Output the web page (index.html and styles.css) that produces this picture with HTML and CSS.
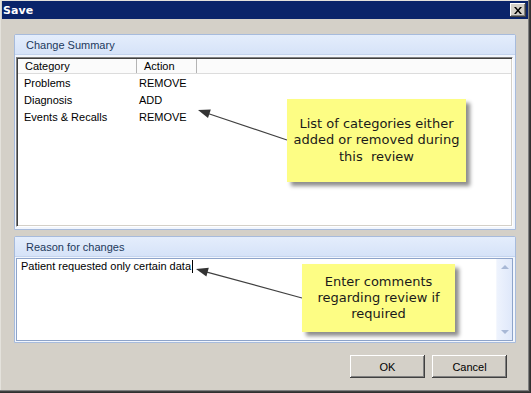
FILE: index.html
```html
<!DOCTYPE html>
<html lang="en">
<head>
    <meta charset="UTF-8">
    <title>Save</title>
    <link rel="stylesheet" href="styles.css">
</head>
<body>
    <div class="window">
        <div class="titlebar">
            <span class="title">Save</span>
            <button type="button" class="close-btn" aria-label="Close">
                <svg width="8" height="7" viewBox="0 0 8 7"><path d="M0 0h2l2 2.5L6 0h2L5 3.5 8 7H6L4 4.5 2 7H0l3-3.5z" fill="#000"/></svg>
            </button>
        </div>
        <div class="content">
            <section class="panel summary">
                <div class="panel-head">Change Summary</div>
                <div class="panel-body">
                    <div class="list">
                        <div class="list-head">
                            <div class="col col-cat">Category</div>
                            <div class="col col-act">Action</div>
                            <div class="col col-rest"></div>
                        </div>
                        <div class="row"><span class="cell-cat">Problems</span><span class="cell-act">REMOVE</span></div>
                        <div class="row"><span class="cell-cat">Diagnosis</span><span class="cell-act">ADD</span></div>
                        <div class="row"><span class="cell-cat">Events &amp; Recalls</span><span class="cell-act">REMOVE</span></div>
                    </div>
                </div>
            </section>
            <section class="panel reason">
                <div class="panel-head">Reason for changes</div>
                <div class="panel-body">
                    <div class="memo">
                        <div class="memo-text">Patient requested only certain data<span class="caret"></span></div>
                        <div class="scrollbar">
                            <span class="arrow-up"></span>
                            <span class="arrow-down"></span>
                        </div>
                    </div>
                </div>
            </section>
            <div class="buttons">
                <button type="button" class="btn">OK</button>
                <button type="button" class="btn">Cancel</button>
            </div>
        </div>

        <!-- annotation callouts -->
        <svg class="arrows" width="531" height="393" viewBox="0 0 531 393">
            <line x1="287" y1="140" x2="208" y2="113.5" stroke="#404040" stroke-width="1.2"/>
            <polygon points="198,110 208,118 210.8,109.5" fill="#333"/>
            <line x1="302" y1="298" x2="206" y2="271.8" stroke="#404040" stroke-width="1.2"/>
            <polygon points="196,269 206.4,276.5 208.8,267.8" fill="#333"/>
        </svg>
        <div class="note note-list">List of categories either<br>added or removed during<br>this&nbsp; review</div>
        <div class="note note-memo">Enter comments<br>regarding review if<br>required</div>
    </div>
</body>
</html>
```

FILE: styles.css
```css
body {
    margin: 0;
    background: #d4d0c8;
    font-family: "Liberation Sans", Arial, sans-serif;
    font-size: 11px;
    color: #000;
}
.window {
    position: relative;
    width: 531px;
    height: 393px;
    box-sizing: border-box;
    background: #d4d0c8;
    box-shadow: inset -1px -1px #303030, inset -2px -2px #404040, inset -3px -3px #808080, inset 1px 1px #e4e2dc;
    overflow: hidden;
}
.titlebar {
    height: 18px;
    margin: 1px 3px 0 2px;
    background: #0a246a;
    display: flex;
    align-items: center;
    justify-content: space-between;
    padding: 0 2px 0 1px;
}
.title {
    color: #fff;
    font-family: "DejaVu Sans", Verdana, sans-serif;
    font-weight: bold;
    font-size: 11px;
    letter-spacing: 0.1px;
}
.close-btn {
    width: 16px;
    height: 14px;
    padding: 0;
    margin: 0;
    border: none;
    background: #d4d0c8;
    box-shadow: inset -1px -1px #404040, inset 1px 1px #fff, inset -2px -2px #808080;
    display: flex;
    align-items: center;
    justify-content: center;
}
.content {
    padding: 15px 15px 0 14px;
}
.panel {
    border: 1px solid #a7bbdc;
    border-radius: 2px 2px 0 0;
    background: #f2f6fd;
    box-sizing: border-box;
}
.summary {
    height: 196px;
}
.reason {
    height: 107px;
    margin-top: 6px;
}
.panel-head {
    height: 20px;
    line-height: 20px;
    padding-left: 11px;
    color: #22395c;
    background: linear-gradient(180deg, #e4edfc 0%, #d6e3f8 100%);
    border-bottom: 1px solid #c4d4ee;
    box-sizing: border-box;
}
.panel-body {
    padding: 2px 2px 0 1px;
}
.reason .panel-body {
    padding-top: 1px;
}
.list {
    height: 170px;
    box-sizing: border-box;
    background: #fff;
    border-top: 1px solid #808080;
    border-left: 1px solid #808080;
    border-right: 1px solid #fff;
    border-bottom: 1px solid #fff;
    box-shadow: inset 1px 1px #404040, inset -1px -1px #d4d0c8;
    padding: 1px 1px 0 1px;
}
.list-head {
    display: flex;
    height: 15px;
    line-height: 14px;
    background: #fbfbfb;
    border-bottom: 1px solid #dcdcdc;
    box-sizing: border-box;
}
.col {
    padding-left: 7px;
    border-right: 1px solid #b4b4b4;
    box-sizing: border-box;
}
.col-cat {
    width: 119px;
}
.col-act {
    width: 60px;
}
.col-rest {
    flex: 1;
    border-right: none;
}
.row {
    display: flex;
    height: 17px;
    line-height: 17px;
}
.row:first-of-type {
    margin-top: 1px;
}
.list-head + .row {
    margin-top: 1px;
}
.cell-cat {
    width: 119px;
    padding-left: 6px;
    box-sizing: border-box;
}
.cell-act {
    padding-left: 2px;
}
.memo {
    position: relative;
    height: 83px;
    box-sizing: border-box;
    background: #fff;
    border: 1px solid #8ea4ca;
    display: flex;
}
.memo-text {
    flex: 1;
    padding: 1px 0 0 4px;
    line-height: 13px;
}
.caret {
    display: inline-block;
    width: 1px;
    height: 13px;
    margin-left: 1px;
    background: #000;
    vertical-align: top;
}
.scrollbar {
    width: 16px;
    background: linear-gradient(90deg, #eef3fd 0%, #dfe8fa 100%);
    border-left: 1px solid #f4f7fd;
    display: flex;
    flex-direction: column;
    justify-content: space-between;
    align-items: center;
    padding: 6px 0 6px;
    box-sizing: border-box;
}
.arrow-up {
    width: 0;
    height: 0;
    border-left: 4px solid transparent;
    border-right: 4px solid transparent;
    border-bottom: 4px solid #a8b8d6;
}
.arrow-down {
    width: 0;
    height: 0;
    border-left: 4px solid transparent;
    border-right: 4px solid transparent;
    border-top: 4px solid #a8b8d6;
}
.buttons {
    display: flex;
    justify-content: flex-end;
    gap: 7px;
    margin-top: 12px;
    padding-right: 9px;
}
.btn {
    width: 75px;
    height: 23px;
    padding: 0;
    border: none;
    background: #d4d0c8;
    font-family: "Liberation Sans", Arial, sans-serif;
    font-size: 11px;
    color: #000;
    box-shadow: inset -1px -1px #404040, inset 1px 1px #fff, inset -2px -2px #808080;
}
.arrows {
    position: absolute;
    left: 0;
    top: 0;
    pointer-events: none;
}
.note {
    position: absolute;
    background: #fdfd84;
    box-shadow: 4px 4px 4px rgba(0,0,0,0.45);
    font-family: "DejaVu Sans", Verdana, sans-serif;
    font-size: 13px;
    line-height: 16.5px;
    color: #1a1a1a;
    text-align: center;
    display: flex;
    align-items: center;
    justify-content: center;
}
.note-list {
    left: 287px;
    top: 99px;
    width: 179px;
    height: 83px;
}
.note-memo {
    left: 302px;
    top: 264px;
    width: 153px;
    height: 68px;
    line-height: 16px;
}
```
